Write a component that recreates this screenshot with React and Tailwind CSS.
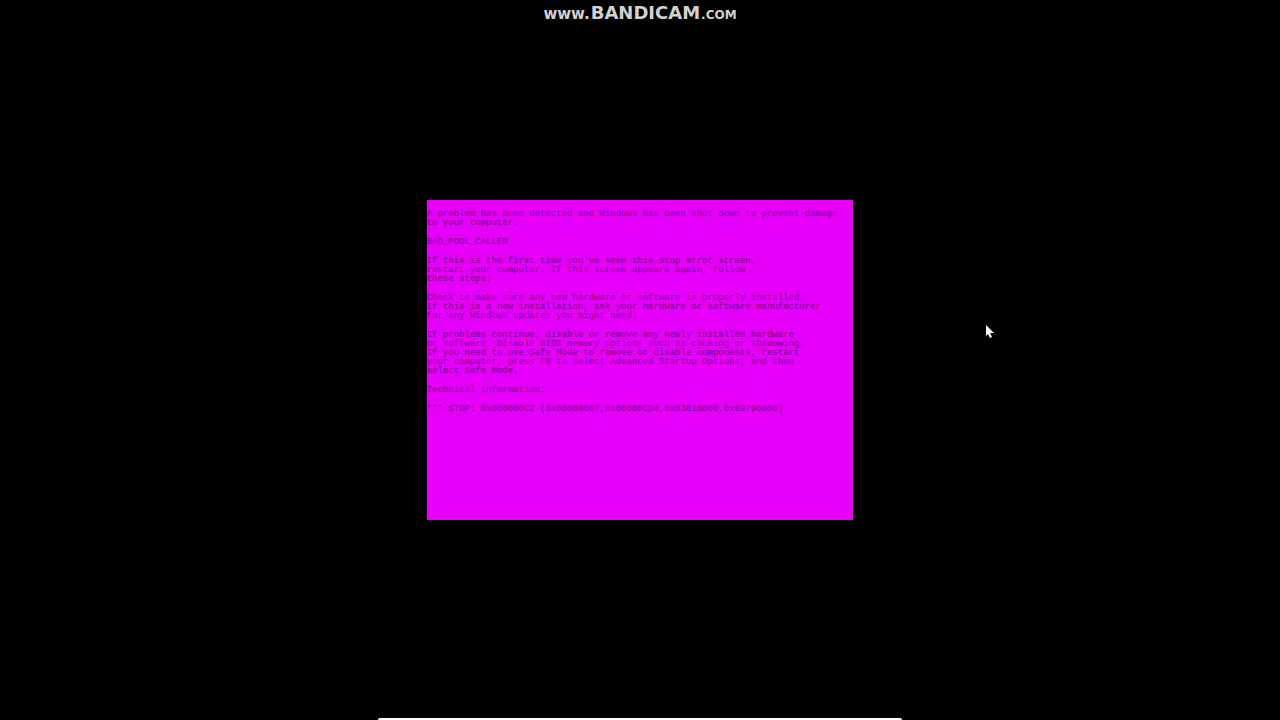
import React from 'react';

const paragraphs = [
  ['A problem has been detected and Windows has been shut down to prevent damage', 'to your computer.'],
  ['BAD_POOL_CALLER'],
  [
    "If this is the first time you've seen this Stop error screen,",
    'restart your computer. If this screen appears again, follow',
    'these steps:',
  ],
  [
    'Check to make sure any new hardware or software is properly installed.',
    'If this is a new installation, ask your hardware or software manufacturer',
    'for any Windows updates you might need.',
  ],
  [
    'If problems continue, disable or remove any newly installed hardware',
    'or software. Disable BIOS memory options such as caching or shadowing.',
    'If you need to use Safe Mode to remove or disable components, restart',
    'your computer, press F8 to select Advanced Startup Options, and then',
    'select Safe Mode.',
  ],
  ['Technical information:'],
  ['*** STOP: 0x000000C2 (0x00000007,0x00000CD4,0x03010000,0x89790008)'],
];

function Watermark() {
  return (
    <div className="absolute inset-x-0 top-0 flex items-baseline justify-center gap-px pt-[3px] font-['DejaVu_Sans',sans-serif] font-bold leading-5 text-[#d2d2d2]">
      <span className="text-[15px]">www.</span>
      <span className="text-[18px]">BANDICAM</span>
      <span className="text-[12px]">.COM</span>
    </div>
  );
}

function StopScreen() {
  return (
    <section className="flex aspect-[4/3] w-1/3 flex-col gap-[10px] overflow-hidden bg-[#e600fa] pt-[10px] font-['Liberation_Mono',monospace] text-[9px] leading-[9px] text-[#780084]">
      {paragraphs.map((lines) => (
        <p key={lines[0]}>
          {lines.map((line) => (
            <span key={line} className="block whitespace-pre">{line}</span>
          ))}
        </p>
      ))}
    </section>
  );
}

function Cursor() {
  return (
    <svg className="absolute left-[77%] top-[45%] h-[14px] w-[10px]" viewBox="0 0 10 14" fill="#fff">
      <path d="M0 1v11l2-2 2 4 2-1-2-4h4z" />
    </svg>
  );
}

function App() {
  return (
    <main className="relative flex min-h-screen items-center justify-center overflow-hidden bg-black">
      <Watermark />
      <StopScreen />
      <Cursor />
      <div className="absolute bottom-0 left-1/2 h-[2px] w-[524px] -translate-x-1/2 rounded-t-sm bg-white" />
    </main>
  );
}

export default App;
